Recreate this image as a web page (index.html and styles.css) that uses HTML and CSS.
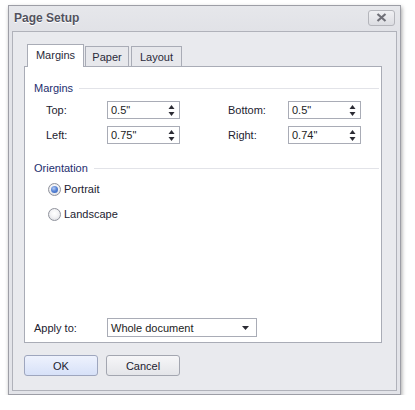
FILE: index.html
```html
<!DOCTYPE html>
<html>
<head>
<meta charset="utf-8">
<title>Page Setup</title>
<link rel="stylesheet" href="styles.css">
</head>
<body>
<div class="window">
  <div class="titlebar">
    <span class="title">Page Setup</span>
    <div class="close">
      <svg width="11" height="9" viewBox="0 0 11 9"><path d="M1.5 1 L9.5 8 M9.5 1 L1.5 8" stroke="#707078" stroke-width="2.2"/></svg>
    </div>
  </div>
  <div class="client">
    <div class="tabs">
      <div class="tab active tab-margins">Margins</div>
      <div class="tab tab-paper">Paper</div>
      <div class="tab tab-layout">Layout</div>
    </div>
    <div class="panel">
      <div class="group-head"><span>Margins</span><i class="rule"></i></div>
      <div class="margins-grid">
        <span class="lbl">Top:</span>
        <div class="spin"><span>0.5"</span><svg class="arrows" width="7" height="13" viewBox="0 0 7 13"><path d="M3.5 1 L6.5 5 L0.5 5 Z M0.5 8 L6.5 8 L3.5 12 Z" fill="#2b2b33"/></svg></div>
        <span class="lbl">Bottom:</span>
        <div class="spin"><span>0.5"</span><svg class="arrows" width="7" height="13" viewBox="0 0 7 13"><path d="M3.5 1 L6.5 5 L0.5 5 Z M0.5 8 L6.5 8 L3.5 12 Z" fill="#2b2b33"/></svg></div>
        <span class="lbl">Left:</span>
        <div class="spin"><span>0.75"</span><svg class="arrows" width="7" height="13" viewBox="0 0 7 13"><path d="M3.5 1 L6.5 5 L0.5 5 Z M0.5 8 L6.5 8 L3.5 12 Z" fill="#2b2b33"/></svg></div>
        <span class="lbl">Right:</span>
        <div class="spin"><span>0.74"</span><svg class="arrows" width="7" height="13" viewBox="0 0 7 13"><path d="M3.5 1 L6.5 5 L0.5 5 Z M0.5 8 L6.5 8 L3.5 12 Z" fill="#2b2b33"/></svg></div>
      </div>
      <div class="group-head orient-head"><span>Orientation</span><i class="rule"></i></div>
      <div class="radios">
        <div class="radio-row"><span class="radio checked"></span><span>Portrait</span></div>
        <div class="radio-row"><span class="radio"></span><span>Landscape</span></div>
      </div>
      <div class="apply-row">
        <span class="apply-lbl">Apply to:</span>
        <div class="combo"><span>Whole document</span><svg width="7" height="4" viewBox="0 0 7 4"><path d="M0 0 L7 0 L3.5 4 Z" fill="#2b2b33"/></svg></div>
      </div>
    </div>
    <div class="buttons">
      <div class="btn btn-ok">OK</div>
      <div class="btn">Cancel</div>
    </div>
  </div>
</div>
</body>
</html>
```

FILE: styles.css
```css
html, body {
  margin: 0;
  padding: 0;
  background: #ffffff;
}
body {
  padding: 5px 0 0 8px;
  font-family: "Liberation Sans", Arial, sans-serif;
  font-size: 11px;
  color: #222230;
}
.window {
  width: 393px;
  height: 390px;
  box-sizing: border-box;
  border: 1px solid #9d9ea6;
  background: #e3e4e9;
  box-shadow: 1px 2px 4px rgba(0, 0, 0, 0.35);
  display: flex;
  flex-direction: column;
}
.titlebar {
  height: 25px;
  display: flex;
  align-items: center;
  justify-content: space-between;
  padding: 0 5px 0 5px;
  background: linear-gradient(#e6e7eb, #e1e2e7);
}
.title {
  font-weight: bold;
  font-size: 12px;
  color: #52525e;
  text-shadow: 0 1px 0 #ffffff;
  margin-top: -1px;
}
.close {
  width: 25px;
  height: 14px;
  border: 1px solid #b4b5bb;
  border-radius: 3px;
  background: linear-gradient(#f0f0f3, #dcdde2);
  display: flex;
  align-items: center;
  justify-content: center;
  margin-top: -2px;
}
.client {
  flex: 1;
  margin: 0 3px 3px 3px;
  border: 1px solid #b0b2ba;
  background: #e9eaee;
  padding: 12px 14px 0 11px;
  display: flex;
  flex-direction: column;
}
.tabs {
  display: flex;
  align-items: flex-end;
  height: 22px;
  padding-left: 3px;
  position: relative;
  z-index: 1;
}
.tab {
  box-sizing: border-box;
  height: 20px;
  border: 1px solid #a9acb6;
  border-bottom: none;
  background: #e7e8ec;
  display: flex;
  align-items: center;
  justify-content: center;
  color: #2a2a3a;
  margin-right: 1px;
}
.tab.active {
  height: 23px;
  margin-bottom: -1px;
  background: #ffffff;
  padding-bottom: 2px;
}
.tab-margins { width: 57px; }
.tab-paper { width: 44px; }
.tab-layout { width: 51px; margin-left: 1px; }
.panel {
  height: 277px;
  box-sizing: border-box;
  border: 1px solid #a9acb6;
  background: #ffffff;
  padding: 14px 0 5px 9px;
  display: flex;
  flex-direction: column;
}
.group-head {
  display: flex;
  align-items: center;
  height: 14px;
  color: #1d2e6e;
}
.group-head .rule {
  flex: 1;
  height: 1px;
  background: #e2e3e8;
  margin: 0 2px 0 6px;
}
.margins-grid {
  display: grid;
  grid-template-columns: 61px 73px 60px 73px;
  column-gap: 0;
  row-gap: 7px;
  margin: 6px 0 0 12px;
  grid-auto-rows: 18px;
}
.margins-grid .lbl {
  display: flex;
  align-items: center;
}
.margins-grid .lbl:nth-child(3),
.margins-grid .lbl:nth-child(7) {
  margin-left: 48px;
}
.margins-grid {
  grid-template-columns: 61px 73px 108px 73px;
}
.spin {
  box-sizing: border-box;
  border: 1px solid #a9acb6;
  background: #fff;
  display: flex;
  align-items: center;
  justify-content: space-between;
  padding: 0 4px 0 3px;
  color: #222;
}
.arrows { display: block; }
.orient-head {
  margin-top: 17px;
}
.radios {
  display: flex;
  flex-direction: column;
  gap: 9px;
  margin: 6px 0 0 14px;
}
.radio-row {
  display: flex;
  align-items: center;
  height: 16px;
  gap: 3px;
}
.radio {
  width: 13px;
  height: 13px;
  box-sizing: border-box;
  border-radius: 50%;
  border: 1px solid #8f929c;
  background: radial-gradient(circle at 50% 40%, #ffffff 0, #f3f3f5 45%, #d5d6dc 100%);
  position: relative;
}
.radio.checked::after {
  content: "";
  position: absolute;
  left: 2px;
  top: 2px;
  width: 7px;
  height: 7px;
  border-radius: 50%;
  background: radial-gradient(circle at 40% 35%, #b6ccf4 0, #5a86d6 45%, #2f5db8 100%);
}
.apply-row {
  margin-top: auto;
  display: flex;
  align-items: center;
}
.apply-lbl {
  width: 73px;
}
.combo {
  box-sizing: border-box;
  width: 150px;
  height: 19px;
  border: 1px solid #a9acb6;
  background: #fff;
  display: flex;
  align-items: center;
  justify-content: space-between;
  padding: 0 7px 0 3px;
  color: #222;
}
.buttons {
  display: flex;
  gap: 8px;
  margin-top: 12px;
}
.btn {
  box-sizing: border-box;
  width: 74px;
  height: 21px;
  border: 1px solid #a3a6b0;
  border-radius: 3px;
  background: linear-gradient(#f6f6f8, #e4e5e9);
  display: flex;
  align-items: center;
  justify-content: center;
  color: #222230;
}
.btn-ok {
  background: linear-gradient(#eef2fd, #d7e1f8);
  border-color: #9ea6be;
}
```
